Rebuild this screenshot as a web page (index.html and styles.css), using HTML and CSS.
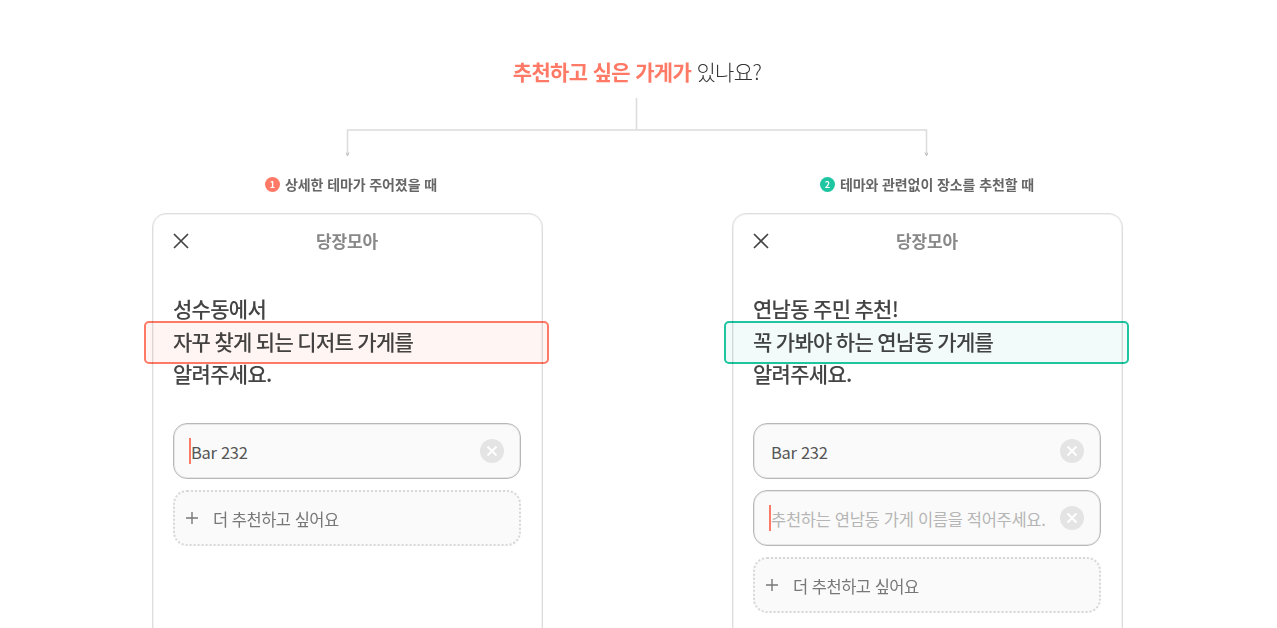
FILE: index.html
```html
<!DOCTYPE html>
<html lang="ko">
<head>
<meta charset="UTF-8">
<meta name="viewport" content="width=device-width, initial-scale=1.0">
<title>당장모아</title>
<link rel="stylesheet" href="styles.css">
</head>
<body>

<div class="page">
    <h1 class="title"><strong>추천하고 싶은 가게가</strong> 있나요?</h1>

    <svg class="tree" width="582" height="60" viewBox="0 0 582 60">
        <path d="M290.5 0V32M1.5 57V32H580.5V57" fill="none" stroke="#dcdcdc" stroke-width="1.5"/>
        <path d="M0 54.5L1.5 58L3 54.5M579 54.5L580.5 58L582 54.5" fill="none" stroke="#bdbdbd" stroke-width="1"/>
    </svg>

    <div class="columns">
        <section class="column">
            <p class="caption caption-first"><span class="badge badge-red">1</span>상세한 테마가 주어졌을 때</p>
            <div class="card">
                <div class="card-head">
                    <svg class="close" width="18" height="18" viewBox="0 0 18 18"><path d="M2 2L16 16M16 2L2 16" stroke="#444" stroke-width="1.7" fill="none"/></svg>
                    <span class="card-title">당장모아</span>
                </div>
                <div class="headline">
                    <p>성수동에서</p>
                    <p>자꾸 찾게 되는 디저트 가게를</p>
                    <p>알려주세요.</p>
                    <div class="mark mark-red"></div>
                </div>
                <div class="fields">
                    <div class="field">
                        <i class="caret"></i>
                        <span class="value">Bar 232</span>
                        <svg class="clear" width="24" height="24" viewBox="0 0 24 24"><circle cx="12" cy="12" r="12" fill="#e4e4e4"/><path d="M7.5 7.5L16.5 16.5M16.5 7.5L7.5 16.5" stroke="#fff" stroke-width="2" fill="none"/></svg>
                    </div>
                    <div class="add">
                        <svg class="plus" width="14" height="14" viewBox="0 0 14 14"><path d="M7 1V13M1 7H13" stroke="#777" stroke-width="1.4" fill="none"/></svg>
                        <span>더 추천하고 싶어요</span>
                    </div>
                </div>
            </div>
        </section>

        <section class="column">
            <p class="caption"><span class="badge badge-green">2</span>테마와 관련없이 장소를 추천할 때</p>
            <div class="card">
                <div class="card-head">
                    <svg class="close" width="18" height="18" viewBox="0 0 18 18"><path d="M2 2L16 16M16 2L2 16" stroke="#444" stroke-width="1.7" fill="none"/></svg>
                    <span class="card-title">당장모아</span>
                </div>
                <div class="headline">
                    <p>연남동 주민 추천!</p>
                    <p>꼭 가봐야 하는 연남동 가게를</p>
                    <p>알려주세요.</p>
                    <div class="mark mark-green"></div>
                </div>
                <div class="fields">
                    <div class="field">
                        <span class="value">Bar 232</span>
                        <svg class="clear" width="24" height="24" viewBox="0 0 24 24"><circle cx="12" cy="12" r="12" fill="#e4e4e4"/><path d="M7.5 7.5L16.5 16.5M16.5 7.5L7.5 16.5" stroke="#fff" stroke-width="2" fill="none"/></svg>
                    </div>
                    <div class="field">
                        <i class="caret"></i>
                        <span class="value placeholder">추천하는 연남동 가게 이름을 적어주세요.</span>
                        <svg class="clear" width="24" height="24" viewBox="0 0 24 24"><circle cx="12" cy="12" r="12" fill="#e4e4e4"/><path d="M7.5 7.5L16.5 16.5M16.5 7.5L7.5 16.5" stroke="#fff" stroke-width="2" fill="none"/></svg>
                    </div>
                    <div class="add">
                        <svg class="plus" width="14" height="14" viewBox="0 0 14 14"><path d="M7 1V13M1 7H13" stroke="#777" stroke-width="1.4" fill="none"/></svg>
                        <span>더 추천하고 싶어요</span>
                    </div>
                </div>
            </div>
        </section>
    </div>
</div>

</body>
</html>
```

FILE: styles.css
```css
html, body {
    margin: 0;
    padding: 0;
    height: 100%;
    overflow: hidden;
    background: #fff;
}

body {
    font-family: "Noto Sans CJK KR", "Noto Sans", sans-serif;
    color: #444;
}

p {
    margin: 0;
}

.page {
    width: 971px;
    margin-left: 152px;
    padding-top: 55px;
    display: flex;
    flex-direction: column;
    align-items: center;
}

.title {
    margin: 0 1px 0 0;
    font-size: 21px;
    line-height: 32px;
    font-weight: 300;
    letter-spacing: -0.65px;
    color: #333;
}

.title strong {
    font-weight: 700;
    color: #ff7a66;
}

.tree {
    display: block;
    margin-top: 11px;
    margin-left: -2px;
}

.columns {
    align-self: stretch;
    display: flex;
    justify-content: space-between;
    margin-top: 16px;
}

.column {
    width: 391px;
}

.caption {
    display: flex;
    justify-content: center;
    align-items: center;
    gap: 5px;
    height: 20px;
    padding-right: 1px;
    font-size: 14px;
    font-weight: 700;
    letter-spacing: -0.1px;
    color: #666;
}

.caption-first {
    padding-left: 7px;
    padding-right: 0;
}

.badge {
    width: 15px;
    height: 15px;
    border-radius: 50%;
    display: flex;
    justify-content: center;
    align-items: center;
    font-size: 9px;
    font-weight: 700;
    letter-spacing: 0;
    color: #fff;
}

.badge-red {
    background: #ff7a66;
}

.badge-green {
    background: #1dc5a0;
}

.card {
    margin-top: 19px;
    height: 500px;
    box-sizing: border-box;
    padding: 1px 20px 0;
    background: #fff;
    border: 1px solid #dedede;
    border-radius: 14px;
    box-shadow: inset 0 0 0 1px #f2f2f2;
}

.card-head {
    position: relative;
    height: 51px;
    display: flex;
    justify-content: center;
    align-items: center;
}

.close {
    position: absolute;
    left: -1px;
    top: 17px;
}

.card-title {
    margin-right: 1px;
    font-size: 17px;
    font-weight: 700;
    letter-spacing: -0.1px;
    color: #888;
}

.headline {
    position: relative;
    margin-top: 26px;
    font-size: 21px;
    line-height: 32.5px;
    font-weight: 500;
    letter-spacing: -0.7px;
    word-spacing: -1px;
    color: #444;
}

.mark {
    position: absolute;
    left: -29px;
    right: -27px;
    top: 29px;
    height: 43px;
    box-sizing: border-box;
    border-radius: 5px;
    border: 2px solid;
    mix-blend-mode: multiply;
}

.mark-red {
    border-color: #ff7a66;
    background: #fff6f4;
}

.mark-green {
    border-color: #1dc5a0;
    background: #f2fbf9;
}

.fields {
    margin-top: 33px;
    display: flex;
    flex-direction: column;
    gap: 11px;
    width: 348px;
}

.field, .add {
    height: 56px;
    box-sizing: border-box;
    border-radius: 14px;
    background: #fafafa;
    display: flex;
    align-items: center;
    font-size: 16.5px;
    letter-spacing: -0.3px;
}

.field {
    position: relative;
    border: 1px solid #b8b8b8;
    box-shadow: inset 0 0 0 1px #e6e6e6;
    padding: 0 16px 0 17px;
}

.value {
    flex: 1;
    padding-top: 2px;
    white-space: nowrap;
    color: #555;
}

.placeholder {
    color: #b5b5b5;
}

.caret {
    position: absolute;
    left: 15px;
    top: 14px;
    width: 2px;
    height: 26px;
    background: #ff7a66;
}

.clear {
    flex: none;
}

.add {
    border: 2px dotted #d8d8d8;
    padding-left: 10px;
    gap: 14px;
    letter-spacing: -0.5px;
    color: #777;
}

.add span {
    padding-top: 2px;
}

.plus {
    flex: none;
}
```
